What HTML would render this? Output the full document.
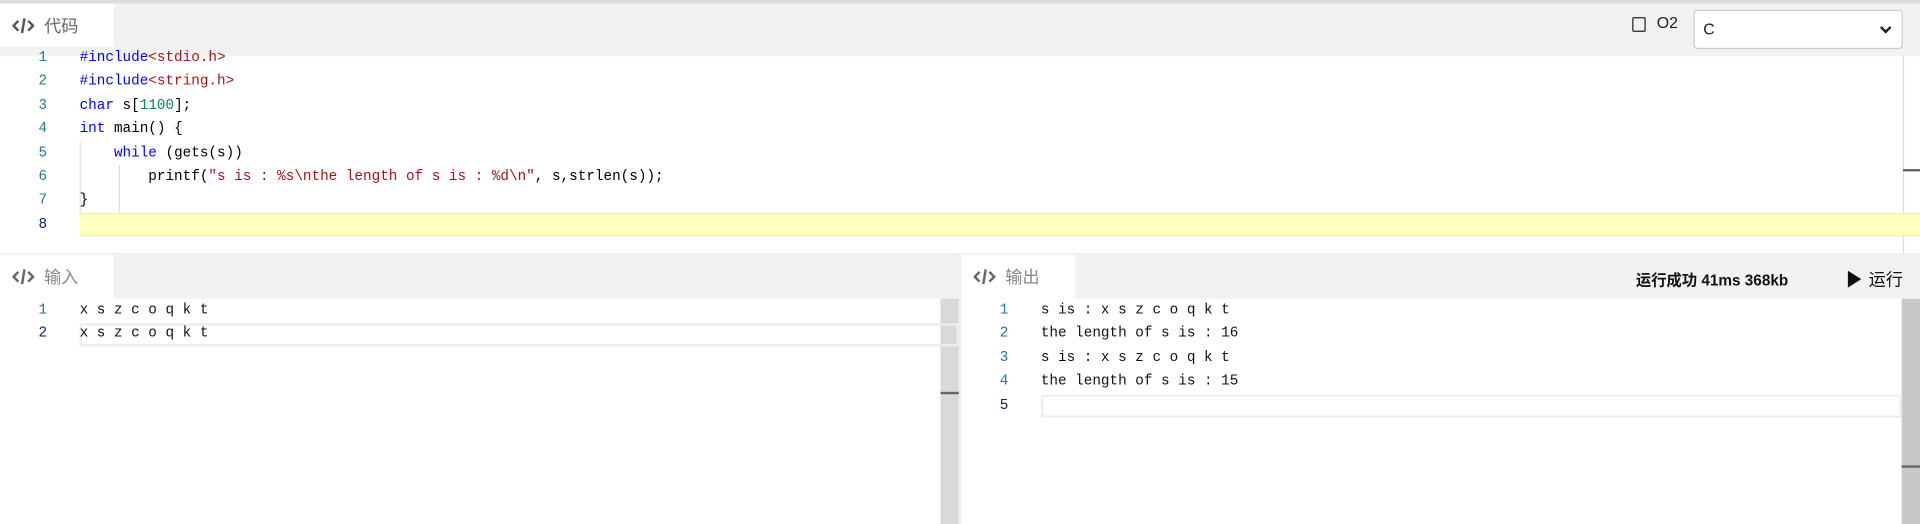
<!DOCTYPE html>
<html><head><meta charset="utf-8"><style>
html,body{margin:0;width:1920px;height:428px;overflow:hidden;background:#fff}
#w{position:absolute;left:0;top:0;width:1568px;height:350px;transform:scale(1.22449);transform-origin:0 0;font-family:"Liberation Sans","Noto Sans CJK SC",sans-serif}
.a{position:absolute}
.hdr{background:#f2f2f2}
.tab{background:#fff;color:#666;font-size:14px;display:flex;align-items:center}
.mono{font-family:"Liberation Mono",monospace;font-size:11.7px;white-space:pre;line-height:19.4px}
.ln{text-align:center;width:20px;color:#237893}
.kw{color:#00f}.st{color:#a31515}.nm{color:#098658}
svg{display:block}
</style></head><body><div id="w">
<div class="a" style="left:0;top:0;width:1568px;height:3px;background:#dcdcdc"></div>
<div class="a hdr" style="left:0;top:3px;width:1568px;height:43px"></div>
<div class="a tab" style="left:0;top:3px;width:93px;height:35px;padding-left:10px;box-sizing:border-box">
<svg width="18" height="14" viewBox="0 0 18 14"><path d="M5 3L1 7l4 4M13 3l4 4-4 4" stroke="#555" stroke-width="2" fill="none"/><path d="M10 1L8 13" stroke="#555" stroke-width="2"/></svg><span style="margin-left:8px">代码</span></div>
<div class="a" style="left:1333px;top:14px;width:9px;height:10px;border:1.5px solid #222;border-radius:1px"></div>
<div class="a" style="left:1353px;top:11px;font-size:13px;color:#222">O2</div>
<div class="a" style="left:1383px;top:8px;width:171px;height:32px;background:#fff;border:1px solid #ccc;border-radius:3px;box-sizing:border-box;font-size:13px;padding:7px 0 0 7px;color:#222">C<svg class="a" style="right:8px;top:12px" width="10" height="7" viewBox="0 0 10 7"><path d="M1 1l4 4 4-4" stroke="#222" stroke-width="2" fill="none"/></svg></div>
<div class="a" style="left:1554px;top:46px;width:1px;height:162px;background:#ddd"></div>
<div class="a" style="left:1554px;top:138px;width:14px;height:2px;background:#666"></div>
<div class="a" style="left:65px;top:174px;width:1503px;height:19px;background:#ffffc0;border-top:1px solid #f0f0b0;border-bottom:1px solid #f0f0b0;box-sizing:border-box"></div>
<div class="a mono" style="left:25px;top:38px"><div class="ln">1</div><div class="ln">2</div><div class="ln">3</div><div class="ln">4</div><div class="ln">5</div><div class="ln">6</div><div class="ln">7</div><div class="ln" style="color:#0b216f">8</div></div>
<div class="a" style="left:65px;top:116px;width:1px;height:58px;background:#ddd"></div>
<div class="a" style="left:97px;top:135px;width:1px;height:39px;background:#ddd"></div>
<div class="a mono" style="left:65px;top:38px"><div><span class="kw">#include</span><span class="st">&lt;stdio.h&gt;</span></div><div><span class="kw">#include</span><span class="st">&lt;string.h&gt;</span></div><div><span class="kw">char</span> s[<span class="nm">1100</span>];</div><div><span class="kw">int</span> main() {</div><div>    <span class="kw">while</span> (gets(s))</div><div>        printf(<span class="st">"s is : %s\nthe length of s is : %d\n"</span>, s,strlen(s));</div><div>}</div></div>
<div class="a" style="left:0;top:207px;width:1568px;height:1px;background:#e5e5e5"></div>
<div class="a hdr" style="left:0;top:208px;width:783px;height:36px"></div>
<div class="a tab" style="left:0;top:208px;width:93px;height:36px;padding-left:10px;box-sizing:border-box"><svg width="18" height="14" viewBox="0 0 18 14"><path d="M5 3L1 7l4 4M13 3l4 4-4 4" stroke="#666" stroke-width="2" fill="none"/><path d="M10 1L8 13" stroke="#666" stroke-width="2"/></svg><span style="margin-left:8px;color:#888">输入</span></div>
<div class="a" style="left:783px;top:208px;width:2px;height:220px;background:#eee"></div>
<div class="a hdr" style="left:785px;top:208px;width:783px;height:36px"></div>
<div class="a tab" style="left:785px;top:208px;width:93px;height:36px;padding-left:10px;box-sizing:border-box"><svg width="18" height="14" viewBox="0 0 18 14"><path d="M5 3L1 7l4 4M13 3l4 4-4 4" stroke="#666" stroke-width="2" fill="none"/><path d="M10 1L8 13" stroke="#666" stroke-width="2"/></svg><span style="margin-left:8px;color:#888">输出</span></div>
<div class="a" style="left:1336px;top:218px;font-size:12.5px;font-weight:bold;color:#111">运行成功 41ms 368kb</div>
<div class="a" style="left:1509px;top:218px;font-size:14px;color:#111;display:flex;align-items:center"><svg width="11" height="14" viewBox="0 0 11 14"><path d="M0 0L11 7 0 14z" fill="#111"/></svg><span style="margin-left:6px">运行</span></div>
<div class="a" style="left:768px;top:244px;width:15px;height:184px;background:#d9d9d9"></div>
<div class="a" style="left:768px;top:320px;width:15px;height:2px;background:#666"></div>
<div class="a" style="left:1553px;top:244px;width:15px;height:184px;background:#c8c8c8"></div>
<div class="a" style="left:1553px;top:380px;width:15px;height:2px;background:#666"></div>
<div class="a" style="left:65px;top:264px;width:718px;height:19px;border:2px solid #eee;box-sizing:border-box"></div>
<div class="a" style="left:850px;top:322px;width:703px;height:19px;border:2px solid #eee;box-sizing:border-box"></div>
<div class="a mono" style="left:25px;top:244px"><div class="ln">1</div><div class="ln" style="color:#0b216f">2</div></div>
<div class="a mono" style="left:65px;top:244px;color:#111"><div>x s z c o q k t</div><div>x s z c o q k t</div></div>
<div class="a mono" style="left:810px;top:244px"><div class="ln">1</div><div class="ln">2</div><div class="ln">3</div><div class="ln">4</div><div class="ln" style="color:#0b216f">5</div></div>
<div class="a mono" style="left:850px;top:244px;color:#111"><div>s is : x s z c o q k t</div><div>the length of s is : 16</div><div>s is : x s z c o q k t</div><div>the length of s is : 15</div></div>
</div></body></html>
